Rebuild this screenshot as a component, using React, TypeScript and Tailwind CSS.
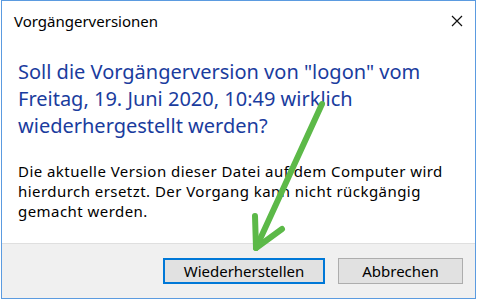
export default function App() {
  return (
    <div className="relative w-[477px] h-[300px] bg-white" style={{ fontFamily: '"Segoe UI", "Noto Sans", sans-serif' }}>
      <div className="ml-[1px] w-[475px] h-[299px] border border-[#5b9be0] flex flex-col bg-white">
        <div className="h-[40px] flex items-center justify-between pl-[12px] pr-[10px]">
          <span className="text-[15px] text-black">Vorgängerversionen</span>
          <svg width="12" height="12" viewBox="0 0 12 12" className="mr-[2px]">
            <path d="M1 1 L11 11 M11 1 L1 11" stroke="#111" strokeWidth="1.2" />
          </svg>
        </div>
        <div className="flex-1 pl-[16px] pt-[17px]">
          <p className="text-[20px] leading-[27px] text-[#1a3c9e] whitespace-nowrap">
            Soll die Vorgängerversion von "logon" vom
            <br />
            Freitag, 19. Juni 2020, 10:49 wirklich
            <br />
            wiederhergestellt werden?
          </p>
          <p className="mt-[22px] text-[15px] leading-[20px] tracking-[0.45px] text-black whitespace-nowrap">
            Die aktuelle Version dieser Datei auf dem Computer wird
            <br />
            hierdurch ersetzt. Der Vorgang kann nicht rückgängig
            <br />
            gemacht werden.
          </p>
        </div>
        <div className="h-[55px] bg-[#f0f0f0] border-t border-[#dfdfdf] flex items-center justify-end gap-[13px] pr-[12px]">
          <button className="w-[162px] h-[26px] bg-[#e1e1e1] border-2 border-[#0078d7] text-[15px] text-black">
            Wiederherstellen
          </button>
          <button className="w-[125px] h-[26px] bg-[#e1e1e1] border border-[#adadad] text-[15px] text-black">
            Abbrechen
          </button>
        </div>
      </div>
      <svg className="absolute left-0 top-0 pointer-events-none" width="477" height="300">
        <g stroke="#5cb948" strokeWidth="6" strokeLinecap="round" strokeLinejoin="round" fill="none">
          <path d="M322 104 L256 248" />
          <path d="M255 216 L256 248 L282 229" />
        </g>
      </svg>
    </div>
  )
}
